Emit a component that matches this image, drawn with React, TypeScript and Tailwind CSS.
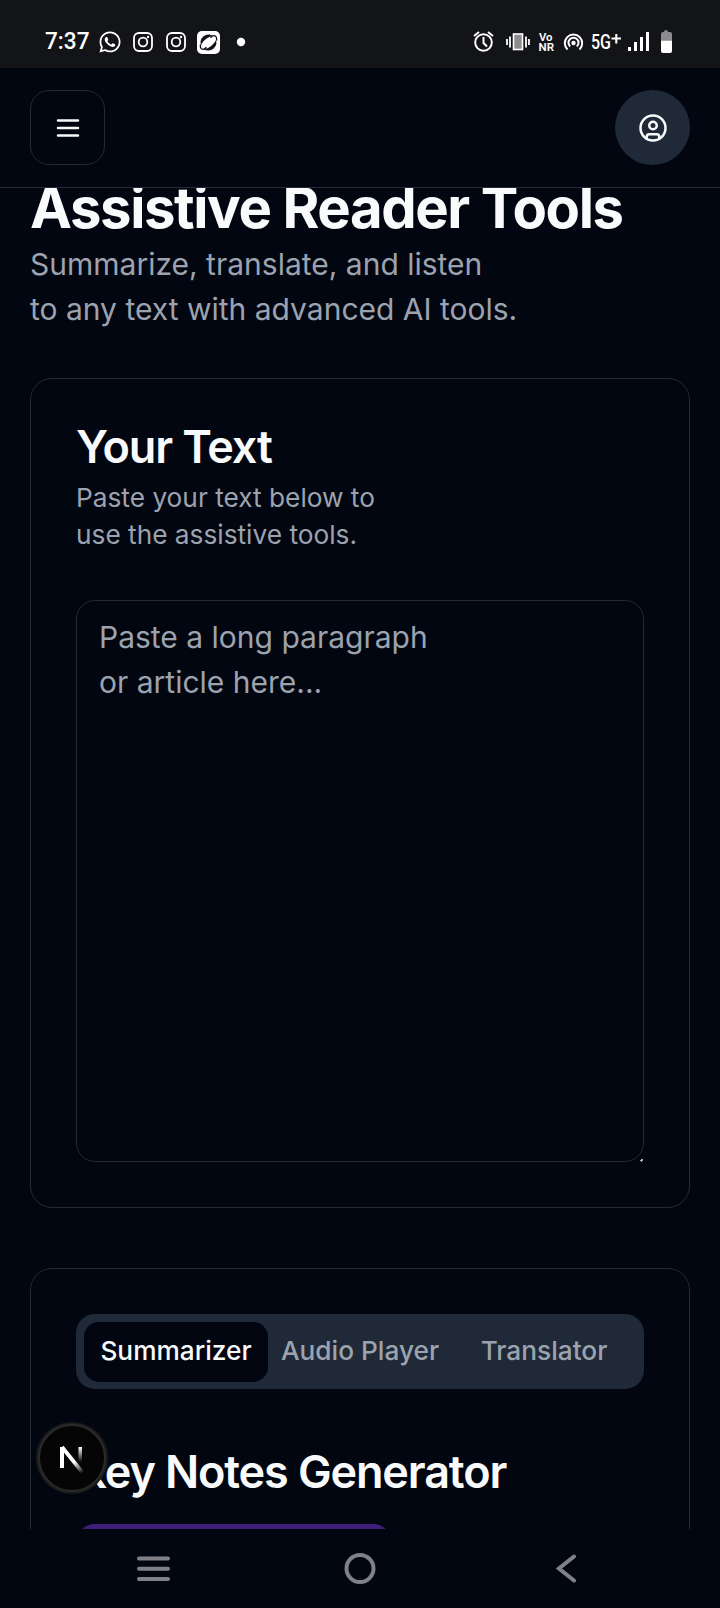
import React from "react";
import { CircleUser } from "lucide-react";
import { FaWhatsapp } from "react-icons/fa";
import { clsx } from "clsx";

const tabs = ["Summarizer", "Audio Player", "Translator"];

const MenuIcon = () => (
  <svg
    viewBox="0 0 24 24"
    className="size-[30px]"
    fill="none"
    stroke="currentColor"
    strokeWidth={2}
    strokeLinecap="round"
  >
    <path d="M4 6h16M4 12h16M4 18h16" />
  </svg>
);

const InstagramIcon = () => (
  <svg
    viewBox="0 0 20 20"
    className="size-5"
    fill="none"
    stroke="currentColor"
    strokeWidth={1.8}
  >
    <rect x="1" y="1" width="18" height="18" rx="5" />
    <circle cx="10" cy="10" r="4.3" />
    <circle cx="15" cy="5" r="1.2" fill="currentColor" stroke="none" />
  </svg>
);

const StatusBar = () => (
  <div className="relative z-20 h-[68px] shrink-0 bg-[#131418] text-white">
    <svg viewBox="0 0 720 68" className="h-[68px] w-[720px]" fill="none">
      {/* clock */}
      <text
        x="45"
        y="49"
        fontSize="23.5"
        fontWeight="500"
        fill="white"
        textLength="44.500"
        lengthAdjust="spacingAndGlyphs"
        className="font-[Roboto,sans-serif]"
      >
        7:37
      </text>
      <FaWhatsapp x="98" y="30" size={24} color="white" />
      <svg x="133" y="32" width="20" height="20">
        <InstagramIcon />
      </svg>
      <svg x="166" y="32" width="20" height="20">
        <InstagramIcon />
      </svg>
      {/* browser notification */}
      <rect x="197" y="31" width="23" height="23" rx="5" fill="white" />
      <g transform="rotate(-38 208.500 42.500)">
        <circle cx="208.500" cy="42.500" r="8" fill="#131418" />
        <ellipse cx="208.500" cy="42.500" rx="9.500" ry="4.300" fill="white" />
        <path
          d="M201 39q-3.500 3.500-1 5.500 1.500 1 4 .5M216 46q3.500-3.500 1-5.500-1.500-1-4-.5"
          stroke="#131418"
          strokeWidth="1.300"
        />
      </g>
      <circle cx="241" cy="42" r="4.200" fill="white" />

      {/* alarm */}
      <g stroke="white" strokeWidth="2">
        <circle cx="483.500" cy="42.500" r="8.300" />
        <path d="M483.500 37v6l3.500 3.500M474 36l5-4M493 36l-5-4" />
      </g>
      {/* vibrate */}
      <rect
        x="513.500"
        y="34"
        width="9"
        height="15.500"
        fill="#8c8c8e"
        stroke="white"
        strokeWidth="1.600"
      />
      <path
        d="M507 39v6M510 36.500v11M526 36.500v11M529 39v6"
        stroke="white"
        strokeWidth="1.800"
      />
      <g fill="white" fontWeight="600" className="font-[Roboto,sans-serif]">
        <text
          x="539"
          y="41"
          fontSize="11"
          textLength="13.500"
          lengthAdjust="spacingAndGlyphs"
        >
          Vo
        </text>
        <text
          x="538.500"
          y="50.500"
          fontSize="11.500"
          textLength="15.500"
          lengthAdjust="spacingAndGlyphs"
        >
          NR
        </text>
      </g>
      {/* hotspot */}
      <g stroke="white" strokeWidth="2">
        <path d="M567.500 49.500a8.700 8.700 0 1 1 12 0" />
        <path d="M570.200 46.500a5 5 0 1 1 6.600 0" />
      </g>
      <circle cx="573.500" cy="43" r="2.200" fill="white" />
      <text
        x="591"
        y="48.700"
        fontSize="20.500"
        fontWeight="500"
        fill="white"
        textLength="20"
        lengthAdjust="spacingAndGlyphs"
        className="font-[Roboto,sans-serif]"
      >
        5G
      </text>
      <path d="M611.500 38.500h9.500M616.300 34v9.500" stroke="white" strokeWidth="2.100" />
      <path
        d="M628 47h3v4h-3zM634 42h3v9h-3zM640 37h3v14h-3zM646 32h3v19h-3z"
        fill="white"
      />
      {/* battery */}
      <path
        d="M661 40.500V34q0-2 2-2h1q0-2 2-2t2 2h2q2 0 2 2v6.500z"
        fill="#8c8c8e"
      />
      <path d="M661 40.500h11V51q0 2-2 2h-7q-2 0-2-2z" fill="white" />
    </svg>
  </div>
);

const Header = () => (
  <header className="z-10 flex h-[120px] shrink-0 items-center justify-between border-b border-[#252934] bg-[#020611] px-[30px]">
    <button className="flex size-[75px] items-center justify-center rounded-[19px] border border-[#252934]">
      <MenuIcon />
    </button>
    <button className="flex size-[75px] items-center justify-center rounded-full bg-[#1f2937]">
      <CircleUser size={30} />
    </button>
  </header>
);

const Card = ({
  className,
  children,
}: {
  className?: string;
  children: React.ReactNode;
}) => (
  <section
    className={clsx(
      "shrink-0 rounded-[22px] border border-[#252934] p-[45px]",
      className
    )}
  >
    {children}
  </section>
);

const NextBadge = () => (
  <div className="absolute top-[1422px] left-[36px] z-10 flex size-[72px] items-center justify-center rounded-full bg-[#1b1b1c]">
    <svg viewBox="0 0 72 72" className="size-[72px]" fill="none">
      <defs>
        <linearGradient id="stem" x1="0" y1="25" x2="0" y2="40" gradientUnits="userSpaceOnUse">
          <stop stopColor="white" />
          <stop offset="1" stopColor="white" stopOpacity="0" />
        </linearGradient>
        <linearGradient id="slash" x1="38" y1="40" x2="47" y2="51" gradientUnits="userSpaceOnUse">
          <stop stopColor="white" />
          <stop offset="1" stopColor="white" stopOpacity="0" />
        </linearGradient>
      </defs>
      <circle cx="36" cy="36" r="33" fill="#050505" stroke="#2b2b2c" strokeWidth="2" />
      <path d="M26 46V25" stroke="white" strokeWidth="4" />
      <path d="M26 25L46.500 50.500" stroke="url(#slash)" strokeWidth="3.800" />
      <rect x="42.500" y="25" width="3.500" height="15" fill="url(#stem)" />
    </svg>
  </div>
);

const NavigationBar = () => (
  <nav className="z-20 flex h-[79px] shrink-0 items-center justify-between bg-[#020611] pr-[142px] pl-[136px]">
    <svg viewBox="0 0 34 26" className="h-[26px] w-[34px]" stroke="#808188" strokeWidth="4" strokeLinecap="round">
      <path d="M3 2.500h29M3 12.800h29M3 23.100h29" />
    </svg>
    <svg viewBox="0 0 32 32" className="mr-[6px] size-8" fill="none" stroke="#808188" strokeWidth="4">
      <circle cx="16" cy="15.500" r="13.500" />
    </svg>
    <svg viewBox="0 0 22 30" className="h-[30px] w-[22px]" fill="none" stroke="#808188" strokeWidth="4" strokeLinecap="round">
      <path d="M18 2.500L3 14.500l15 12" />
    </svg>
  </nav>
);

export default function App() {
  return (
    <div className="relative flex h-[1608px] w-[720px] flex-col overflow-hidden bg-[#020611] font-[Inter,sans-serif] text-[#f9fafb]">
      <StatusBar />
      <Header />
      <main className="-mt-[13px] flex min-h-0 flex-1 flex-col overflow-hidden px-[30px]">
        <h1 className="shrink-0 text-[56.25px] leading-[67px] font-bold tracking-tight whitespace-nowrap">
          Assistive Reader Tools
        </h1>
        <p className="shrink-0 text-[30px] leading-[45px] text-[#9ca3af]">
          Summarize, translate, and listen
          <br />
          to any text with advanced AI tools.
        </p>

        <Card className="mt-[46px] h-[830px]">
          <h2 className="text-[45px] leading-[45px] font-semibold tracking-tight">
            Your Text
          </h2>
          <p className="mt-[10px] text-[26.25px] leading-[37px] text-[#9ca3af]">
            Paste your text below to
            <br />
            use the assistive tools.
          </p>
          <div className="relative mt-[47px]">
            <textarea
              className="block h-[562px] w-full resize-none rounded-[19px] border border-[#252934] px-[22px] py-[14px] text-[30px] leading-[45px] placeholder:text-[#9ca3af]"
              placeholder={"Paste a long paragraph\nor article here..."}
            />
            {/* resize grip */}
            <svg viewBox="0 0 3 3" className="absolute right-[1px] bottom-0 size-[3px]">
              <path d="M1 0h2v2H2v1H1V2H0V1h1z" fill="#b0b0b0" />
            </svg>
          </div>
        </Card>

        <Card className="mt-[60px] h-[400px]">
          <div className="flex h-[75px] rounded-[19px] bg-[#1f2937] px-[8px] pt-[8px] pb-[7px] text-[26.25px] font-medium">
            {tabs.map((tab, i) => (
              <button
                key={tab}
                className={clsx(
                  "flex-1 rounded-[15px] pb-[2px] whitespace-nowrap",
                  i === 0 ? "bg-[#020611]" : "text-[#9ca3af]"
                )}
              >
                {tab}
              </button>
            ))}
          </div>
          <h2 className="mt-[60px] text-[45px] leading-[45px] font-semibold tracking-tight">
            Key Notes Generator
          </h2>
          <button className="mt-[30px] h-[75px] w-[316px] rounded-[19px] bg-[#401f7c]" />
        </Card>
      </main>
      <NextBadge />
      <NavigationBar />
    </div>
  );
}
